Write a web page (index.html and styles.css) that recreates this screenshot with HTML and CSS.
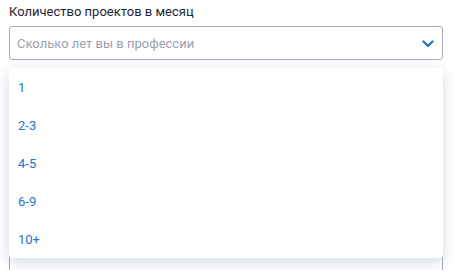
FILE: index.html
```html
<!DOCTYPE html>
<html lang="ru">
<head>
<meta charset="utf-8">
<link rel="stylesheet" href="styles.css">
</head>
<body>
<div class="form">
  <div class="field">
    <div class="label">Количество проектов в месяц</div>
    <div class="select-wrap">
      <div class="select">
        <span class="placeholder">Сколько лет вы в профессии</span>
        <svg class="chevron" width="12" height="8" viewBox="0 0 12 8"><path d="M1.5 1.5 L6 6 L10.5 1.5" fill="none" stroke="#1f6fc5" stroke-width="2.2" stroke-linecap="round" stroke-linejoin="round"/></svg>
      </div>
      <ul class="menu">
        <li>1</li>
        <li>2-3</li>
        <li>4-5</li>
        <li>6-9</li>
        <li>10+</li>
      </ul>
    </div>
  </div>
  <div class="field next">
    <div class="area"></div>
  </div>
</div>
</body>
</html>
```
FILE: styles.css
```css
html, body {
  margin: 0;
  padding: 0;
  background: #ffffff;
}
body {
  font-family: Roboto, "Noto Sans", sans-serif;
  width: 456px;
  height: 270px;
  overflow: hidden;
}
.form {
  padding: 0 13px 0 9px;
}
.field {
  display: flex;
  flex-direction: column;
}
.label {
  font-size: 13px;
  line-height: 16px;
  color: #1f2633;
  padding-top: 4px;
  height: 16px;
}
.select-wrap {
  position: relative;
  margin-top: 6px;
}
.select {
  box-sizing: border-box;
  height: 34px;
  border: 1px solid #a3aabb;
  border-radius: 3px;
  display: flex;
  align-items: center;
  justify-content: space-between;
  padding: 0 8px 0 7px;
}
.placeholder {
  font-size: 13px;
  color: #9aa1ad;
}
.chevron {
  display: block;
  margin-top: 1px;
}
.menu {
  position: absolute;
  top: 42px;
  left: 0;
  right: 0;
  margin: 0;
  padding: 0;
  list-style: none;
  background: #ffffff;
  border-radius: 3px;
  box-shadow: 0 4px 14px rgba(50, 75, 140, 0.22);
  z-index: 2;
}
.menu li {
  height: 38px;
  display: flex;
  align-items: center;
  padding-left: 9px;
  font-size: 13px;
  color: #2a72c4;
}
.next {
  margin-top: 168px;
}
.area {
  box-sizing: border-box;
  height: 42px;
  border: 1px solid #a3aabb;
  border-bottom: none;
  border-radius: 3px 3px 0 0;
}
```
